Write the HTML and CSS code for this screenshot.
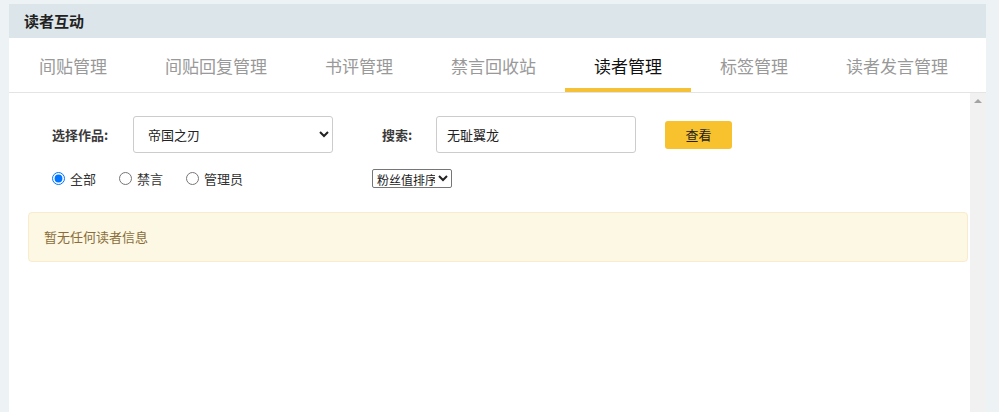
FILE: index.html
```html
<!DOCTYPE html>
<html lang="zh-CN">
<head>
<meta charset="utf-8">
<title>读者互动</title>
<link rel="stylesheet" href="styles.css">
</head>
<body>
<div class="page">
  <div class="panel">
    <div class="panel-head">读者互动</div>
    <div class="tabs">
      <a class="tab">间贴管理</a>
      <a class="tab">间贴回复管理</a>
      <a class="tab">书评管理</a>
      <a class="tab">禁言回收站</a>
      <a class="tab active">读者管理</a>
      <a class="tab">标签管理</a>
      <a class="tab">读者发言管理</a>
    </div>
    <div class="body">
      <div class="content">
        <div class="row row-main">
          <span class="label label-work">选择作品:</span>
          <select class="field field-select">
            <option>帝国之刃</option>
          </select>
          <span class="label label-search">搜索:</span>
          <input class="field field-input" type="text" value="无耻翼龙">
          <button class="btn">查看</button>
        </div>
        <div class="row row-filter">
          <div class="radios">
            <label class="radio"><input type="radio" name="t" checked><span>全部</span></label>
            <label class="radio"><input type="radio" name="t"><span>禁言</span></label>
            <label class="radio"><input type="radio" name="t"><span>管理员</span></label>
          </div>
          <select class="sort">
            <option>粉丝值排序</option>
          </select>
        </div>
        <div class="alert">暂无任何读者信息</div>
      </div>
      <div class="scrollbar"><span class="arrow"></span></div>
    </div>
  </div>
</div>
</body>
</html>
```
FILE: styles.css
```css
* { box-sizing: border-box; }
html, body { margin: 0; padding: 0; }
body {
  background: #edf2f5;
  font-family: "Microsoft YaHei", "Noto Sans CJK SC", "Noto Sans", sans-serif;
  color: #333;
  width: 999px;
  height: 412px;
  overflow: hidden;
}
.page {
  padding: 4px 13px 0 9px;
}
.panel {
  background: #fff;
}
.panel-head {
  height: 34px;
  line-height: 34px;
  padding-left: 15px;
  background: #dce5e9;
  font-size: 15px;
  font-weight: bold;
  color: #222;
}
.tabs {
  display: flex;
  height: 55px;
  padding-left: 1px;
  border-bottom: 1px solid #e4e4e4;
}
.tab {
  display: block;
  height: 54px;
  padding: 5px 29px 0;
  line-height: 45px;
  font-size: 17px;
  color: #999;
  border-bottom: 4px solid transparent;
  white-space: nowrap;
  cursor: pointer;
}
.tab.active {
  color: #111;
  border-bottom-color: #f5c136;
}
.body {
  display: flex;
  height: 320px;
}
.content {
  flex: 1;
  padding: 23px 2px 0 0;
}
.row {
  display: flex;
  align-items: center;
  padding-left: 43px;
}
.label {
  font-size: 13px;
  font-weight: 600;
  color: #3a3a3a;
}
.label-work { width: 81px; }
.label-search { width: 54px; margin-left: 49px; }
.field {
  height: 37px;
  border: 1px solid #ccc;
  border-radius: 3px;
  background: #fff;
  font-family: inherit;
  font-size: 13px;
  color: #222;
}
.field-select {
  width: 200px;
  padding: 0 8px 0 10px;
}
.field-input {
  width: 200px;
  padding: 0 10px;
  outline: none;
}
.btn {
  margin-left: 29px;
  width: 67px;
  height: 28px;
  border: none;
  border-radius: 3px;
  background: #f8c22e;
  font-family: inherit;
  font-size: 13px;
  color: #222;
  cursor: pointer;
}
.row-filter {
  margin-top: 16px;
  height: 18px;
}
.radios {
  display: flex;
  align-items: center;
  width: 320px;
}
.radio {
  display: flex;
  align-items: center;
  gap: 5px;
  margin-right: 23px;
  font-size: 13px;
  color: #333;
}
.radio input {
  margin: 0;
  width: 13px;
  height: 13px;
}
.sort {
  width: 80px;
  height: 19px;
  font-family: inherit;
  font-size: 12px;
  color: #222;
  padding: 0;
  border: 1px solid #767676;
  border-radius: 2px;
  background: #fff;
}
.alert {
  margin: 25px 0 0 19px;
  padding: 14px 15px;
  line-height: 20px;
  font-size: 13px;
  color: #8a6d3b;
  background: #fcf8e3;
  border: 1px solid #faebcc;
  border-radius: 4px;
}
.scrollbar {
  width: 16px;
  background: #f1f1f1;
  display: flex;
  justify-content: center;
  padding-top: 6px;
}
.arrow {
  width: 0;
  height: 0;
  border-left: 4px solid transparent;
  border-right: 4px solid transparent;
  border-bottom: 4px solid #a3a3a3;
}
```
